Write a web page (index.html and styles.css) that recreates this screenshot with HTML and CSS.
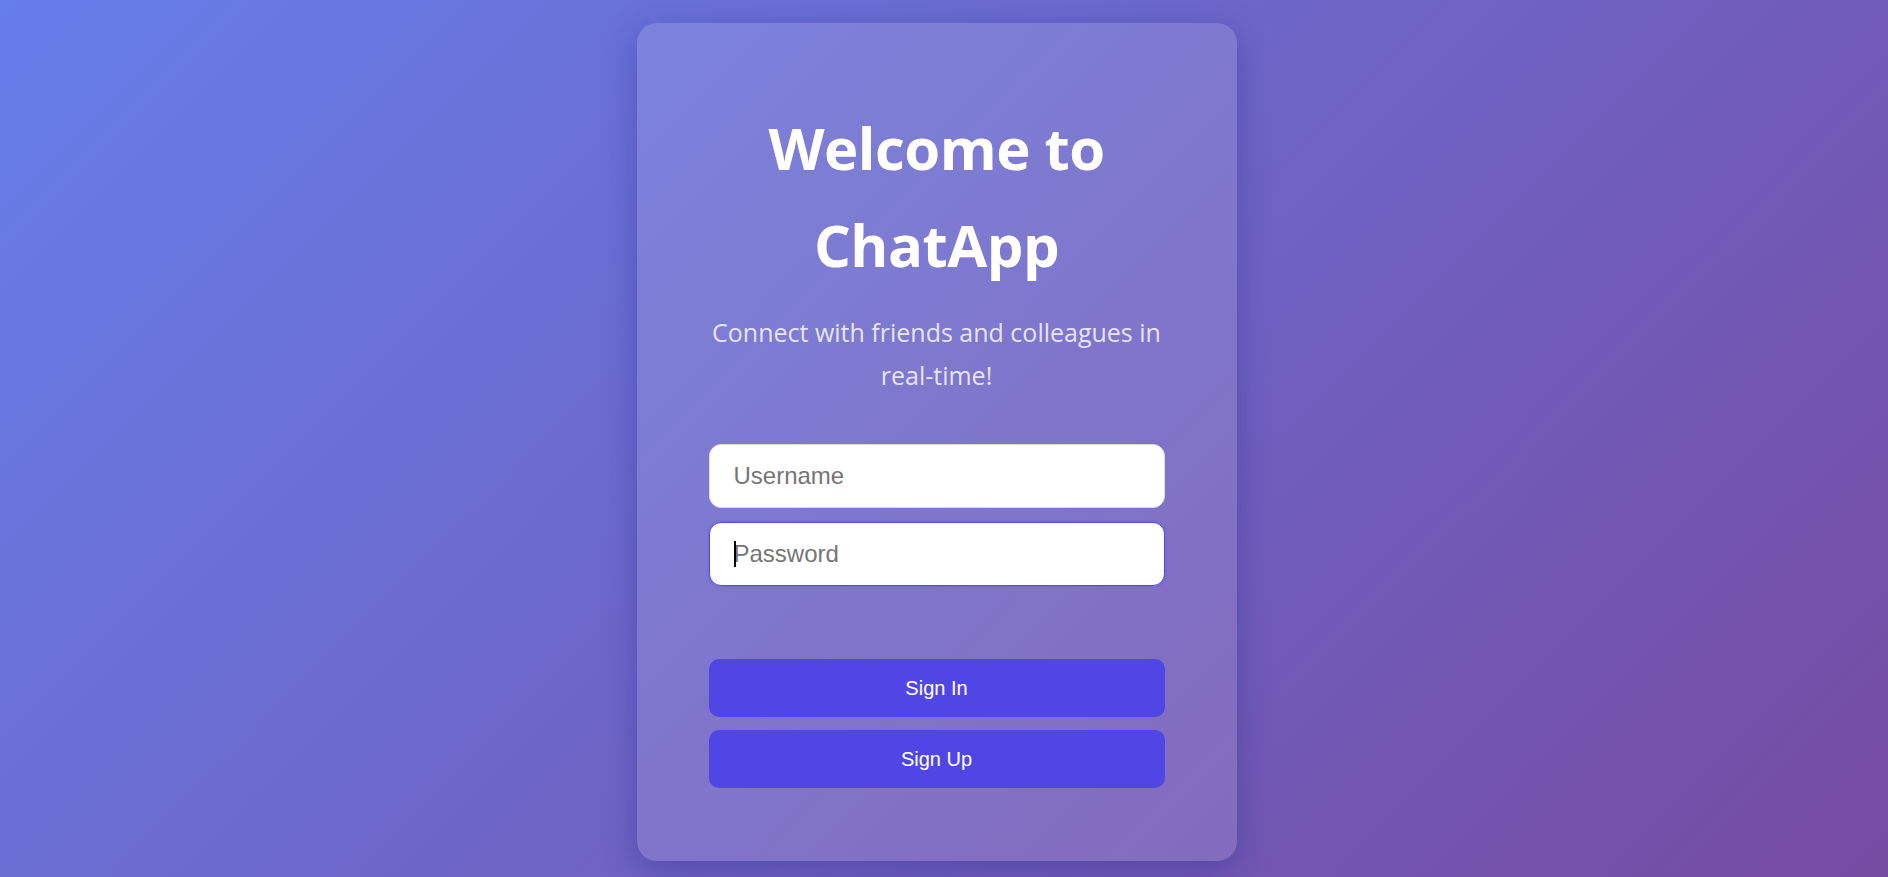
FILE: index.html
```html
<!DOCTYPE html>
<html lang="en">
<head>
<meta charset="utf-8">
<title>ChatApp</title>
<link rel="stylesheet" href="styles.css">
</head>
<body>
  <main class="card">
    <h1 class="title">Welcome to ChatApp</h1>
    <p class="subtitle">Connect with friends and colleagues in real-time!</p>
    <form class="form">
      <div class="fields">
        <input class="field" type="text" placeholder="Username">
        <div class="field-wrap">
          <input class="field field-focus" type="password" placeholder="Password">
          <span class="caret"></span>
        </div>
      </div>
      <div class="actions">
        <button type="button" class="btn">Sign In</button>
        <button type="button" class="btn">Sign Up</button>
      </div>
    </form>
  </main>
</body>
</html>
```
FILE: styles.css
```css
* { box-sizing: border-box; }

html, body { height: 100%; }

body {
  margin: 0;
  min-height: 100vh;
  display: flex;
  align-items: center;
  justify-content: center;
  padding: 7px 15px 0 0;
  background: linear-gradient(135deg, #667eea 0%, #764ba2 100%);
  font-family: "Open Sans", "Noto Sans", sans-serif;
}

.card {
  width: 600px;
  padding: 76px 72px 73px;
  border-radius: 20px;
  background: rgba(255, 255, 255, 0.12);
  box-shadow: 0 8px 32px rgba(31, 38, 135, 0.37);
  text-align: center;
}

.title {
  margin: 0;
  color: #ffffff;
  font-size: 58px;
  font-weight: 700;
  line-height: 97px;
  letter-spacing: -0.5px;
}

.subtitle {
  margin: 18px 0 0;
  color: rgba(255, 255, 255, 0.82);
  font-size: 25px;
  line-height: 43px;
}

.form {
  margin-top: 47px;
}

.fields {
  display: flex;
  flex-direction: column;
  gap: 14px;
}

.field-wrap {
  position: relative;
}

.field {
  display: block;
  width: 100%;
  height: 64px;
  padding: 0 24px;
  border: 1px solid #dcdcdc;
  border-radius: 12px;
  background: #ffffff;
  font-family: "Liberation Sans", Arial, sans-serif;
  font-size: 24px;
  color: #333;
  outline: none;
}

.field::placeholder {
  color: #757575;
}

.field-focus {
  border: 1.5px solid #4f46e5;
  box-shadow: 0 0 0 2px rgba(79, 70, 229, 0.12);
}

.caret {
  position: absolute;
  left: 25px;
  top: 19px;
  width: 2px;
  height: 26px;
  background: #000;
}

.actions {
  margin-top: 73px;
  display: flex;
  flex-direction: column;
  gap: 13px;
}

.btn {
  display: block;
  width: 100%;
  height: 58px;
  border: none;
  border-radius: 10px;
  background: #4f46e5;
  color: #ffffff;
  font-family: "Liberation Sans", Arial, sans-serif;
  font-size: 20px;
  cursor: pointer;
}
```
